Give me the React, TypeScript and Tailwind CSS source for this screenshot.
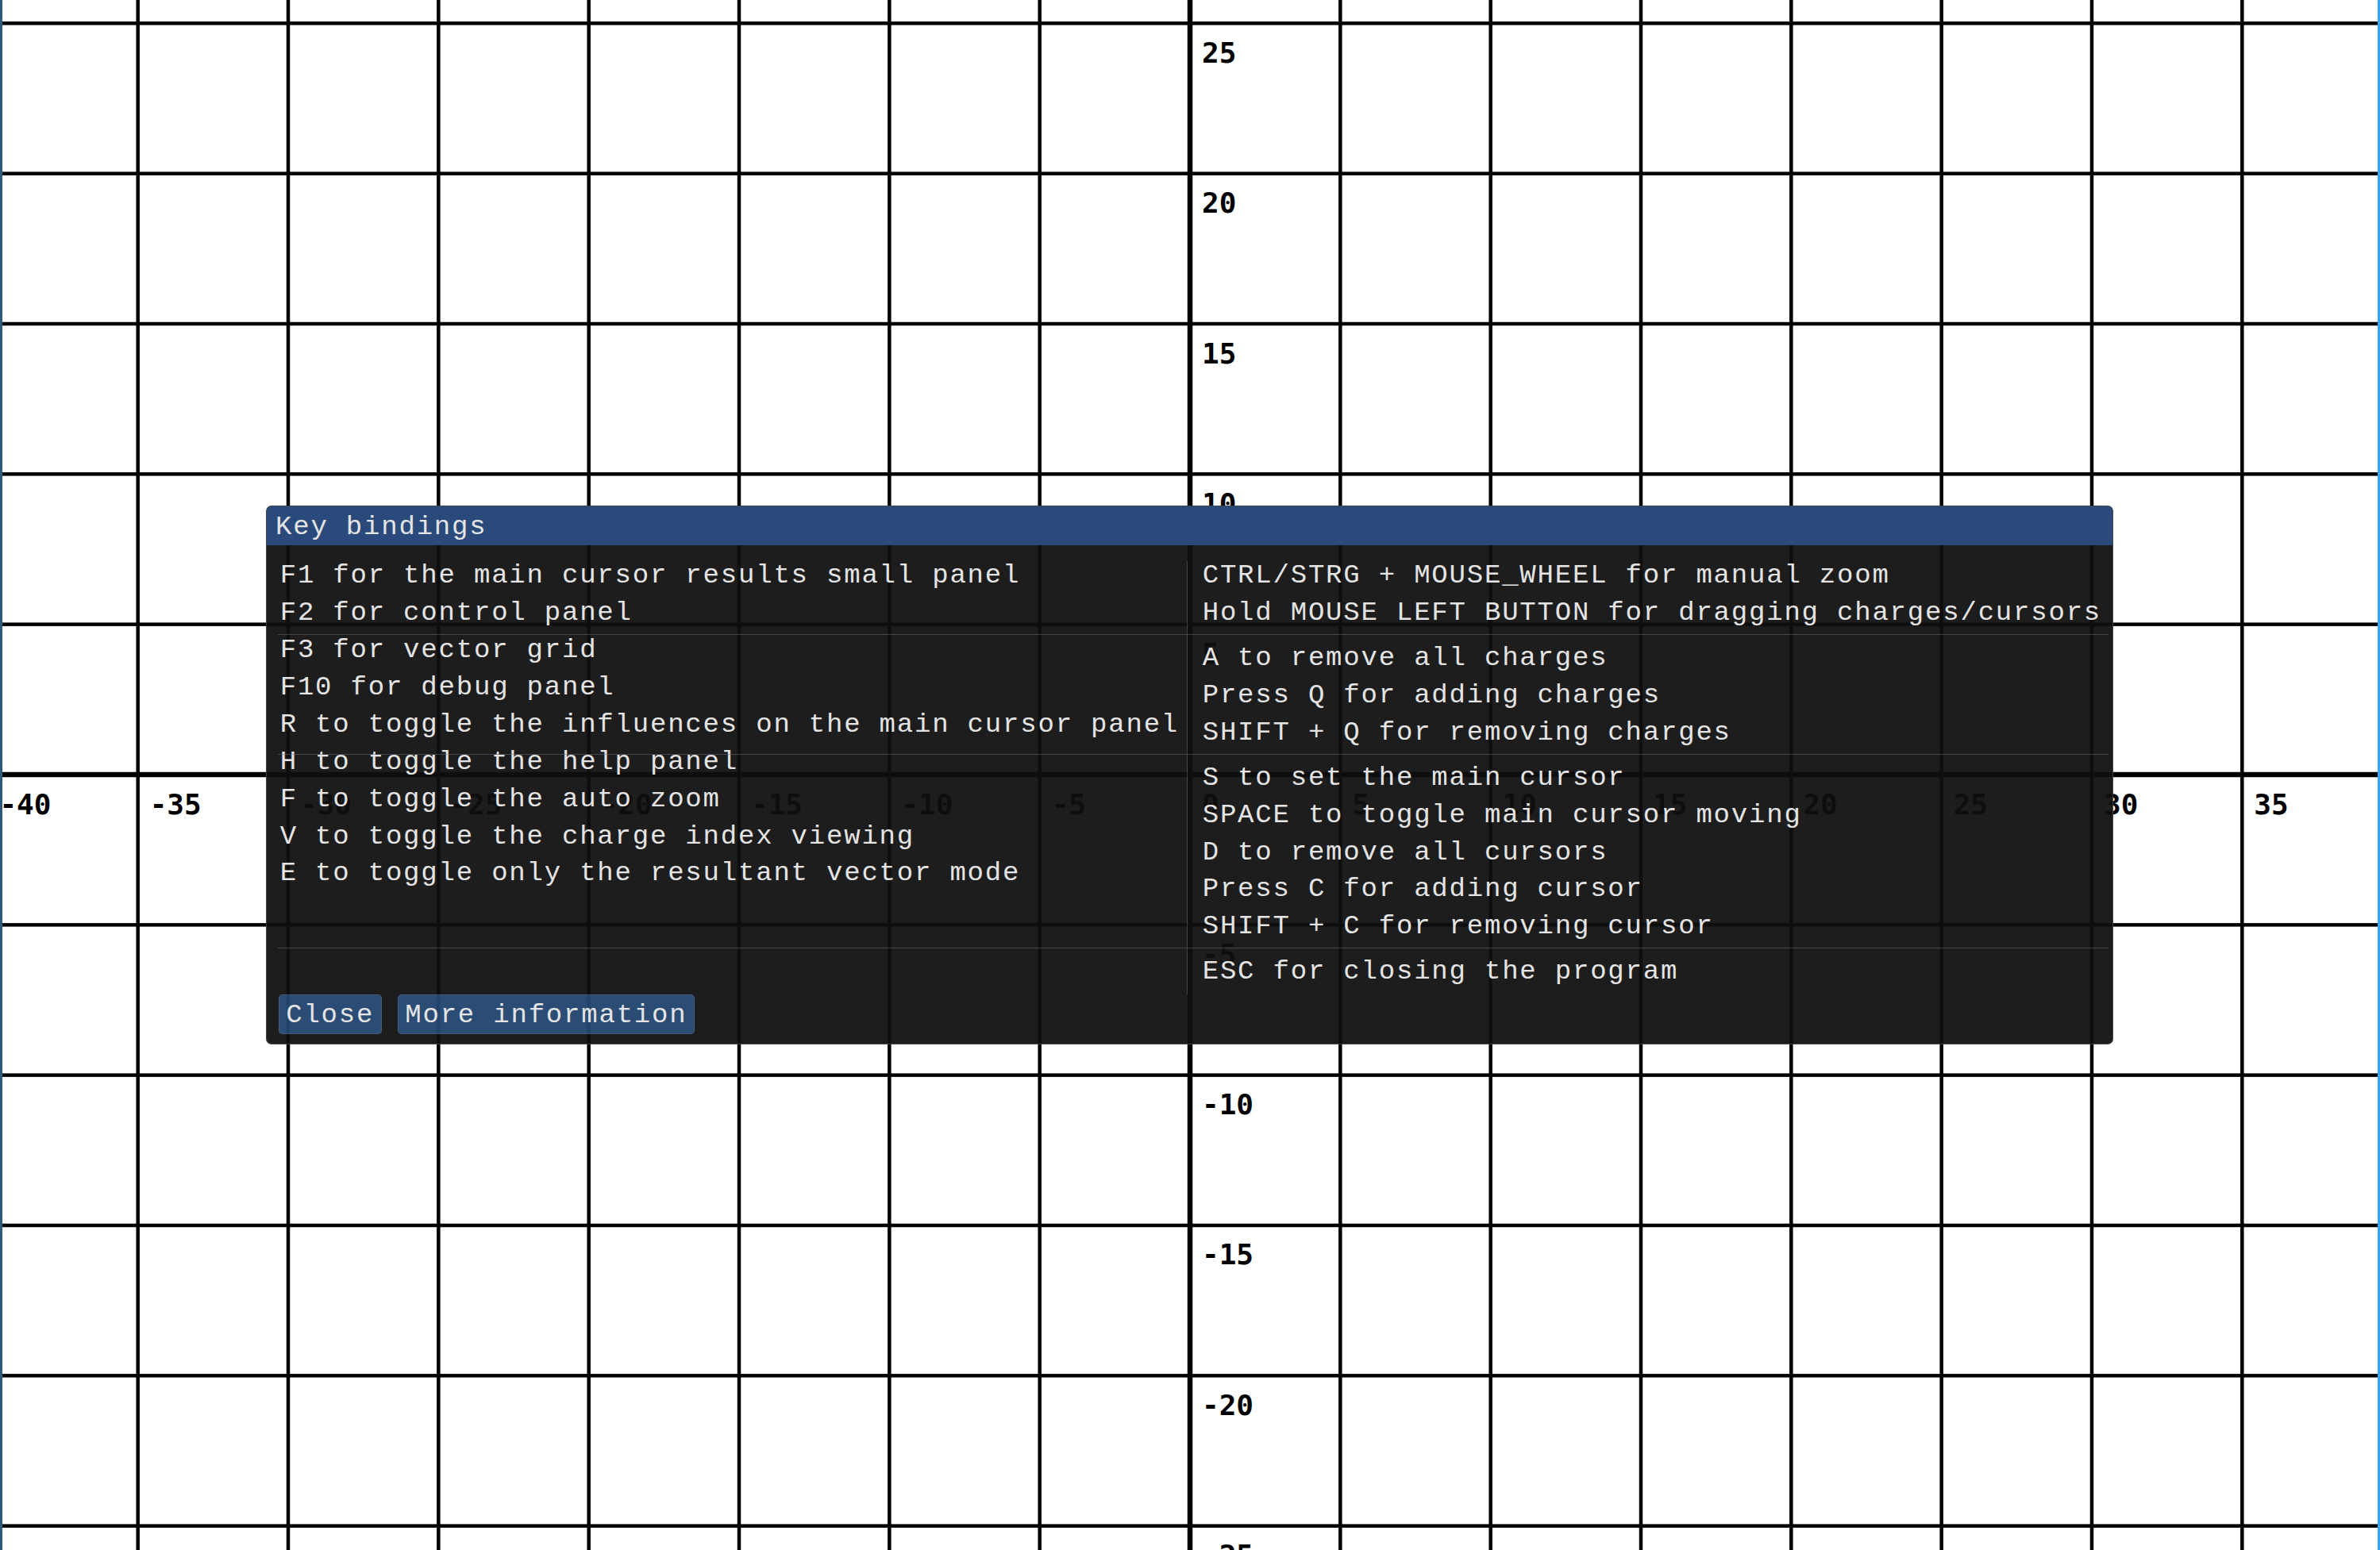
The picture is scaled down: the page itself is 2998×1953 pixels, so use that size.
import React from "react";

const CX = 1499;
const CY = 976;
const S = 189.33;
const W = 2998;
const H = 1953;

const leftRows = [
  "F1 for the main cursor results small panel",
  "F2 for control panel",
  "F3 for vector grid",
  "F10 for debug panel",
  "R to toggle the influences on the main cursor panel",
  "H to toggle the help panel",
  "F to toggle the auto zoom",
  "V to toggle the charge index viewing",
  "E to toggle only the resultant vector mode",
];

const rightGroups = [
  ["CTRL/STRG + MOUSE_WHEEL for manual zoom", "Hold MOUSE LEFT BUTTON for dragging charges/cursors"],
  ["A to remove all charges", "Press Q for adding charges", "SHIFT + Q for removing charges"],
  [
    "S to set the main cursor",
    "SPACE to toggle main cursor moving",
    "D to remove all cursors",
    "Press C for adding cursor",
    "SHIFT + C for removing cursor",
  ],
  ["ESC for closing the program"],
];

function Grid() {
  const xs: number[] = [];
  for (let k = -8; k <= 7; k++) xs.push(k);
  const ys: number[] = [];
  for (let k = -5; k <= 5; k++) ys.push(k);
  const labelStyle = { fontFamily: '"DejaVu Sans Mono", monospace', fontSize: 36, fontWeight: 700 };
  return (
    <svg className="absolute left-0 top-0" width={W} height={H} viewBox={`0 0 ${W} ${H}`}>
      <rect x={0} y={0} width={W} height={H} fill="#ffffff" />
      {xs.map((k) => {
        const x = CX + k * S;
        const w = k === 0 ? 6.5 : 4.5;
        return <rect key={"vx" + k} x={x - w / 2} y={0} width={w} height={H} fill="#000" />;
      })}
      {ys.map((k) => {
        const y = CY + k * S;
        const w = k === 0 ? 6.5 : 4.5;
        return <rect key={"hy" + k} x={0} y={y - w / 2} width={W} height={w} fill="#000" />;
      })}
      {xs.map((k) => {
        const x = CX + k * S;
        return (
          <text key={"lx" + k} x={x + 15} y={CY + 49.5} fill="#000" style={labelStyle}>
            {String(k * 5)}
          </text>
        );
      })}
      {ys
        .filter((k) => k !== 0)
        .map((k) => {
          const y = CY + k * S;
          return (
            <text key={"ly" + k} x={CX + 15} y={y + 49.5} fill="#000" style={labelStyle}>
              {String(-k * 5)}
            </text>
          );
        })}
    </svg>
  );
}

function Row({ text }: { text: string }) {
  return <div className="whitespace-pre h-[37.9px]">{text}</div>;
}

function Sep() {
  return <div className="h-px w-[2306px] -ml-[1164.6px] -mt-[2px] mb-[2px] bg-[rgba(110,110,128,0.5)] shrink-0" />;
}

export default function App() {
  return (
    <div className="relative w-[2998px] h-[1953px] overflow-hidden bg-white">
      <Grid />
      <div className="absolute left-0 top-0 h-full w-[3px] bg-[#2e5a7e]" />
      <div className="absolute right-0 top-0 h-full w-[3px] bg-[#3fa1f2]" />

      <div className="absolute left-[335px] top-[637px] w-[2327px] rounded-[7px] overflow-hidden border border-[rgba(110,110,128,0.5)] bg-[rgba(15,15,15,0.94)] font-['Liberation_Mono',monospace] text-[34px] tracking-[1.8px] leading-[37.9px] text-[#e4e4e4]">
        <div className="h-[49px] bg-[#294a7a] pl-[11px] pt-[8px] whitespace-pre">Key bindings</div>
        <div className="pl-[14.7px] pt-[20.3px] pb-[11.7px]">
          <div className="flex">
            <div className="w-[1144px] shrink-0 flex flex-col gap-[9px] pl-[2px]">
              {leftRows.map((t) => (
                <Row key={t} text={t} />
              ))}
            </div>
            <div className="flex-1 border-l border-[rgba(110,110,128,0.5)] pl-[19px] pb-[9px] flex flex-col gap-[9px]">
              {rightGroups.map((g, gi) => (
                <React.Fragment key={gi}>
                  {gi > 0 && <Sep />}
                  {g.map((t) => (
                    <Row key={t} text={t} />
                  ))}
                </React.Fragment>
              ))}
            </div>
          </div>
          <div className="flex gap-[20px]">
            <button className="h-[50px] px-[8.5px] pt-[3px] rounded-[5px] bg-[rgba(66,150,250,0.4)] border border-[rgba(110,110,128,0.5)] whitespace-pre">
              Close
            </button>
            <button className="h-[50px] px-[8.5px] pt-[3px] rounded-[5px] bg-[rgba(66,150,250,0.4)] border border-[rgba(110,110,128,0.5)] whitespace-pre">
              More information
            </button>
          </div>
        </div>
      </div>
    </div>
  );
}
